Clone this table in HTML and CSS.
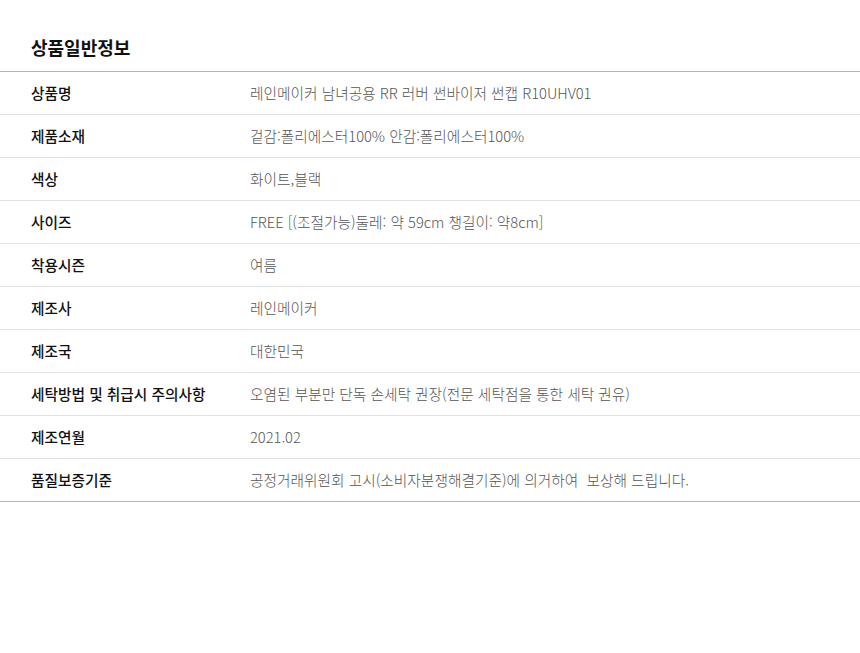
FILE: index.html
```html
<!DOCTYPE html>
<html lang="ko">
<head>
<meta charset="utf-8">
<link rel="stylesheet" href="styles.css">
</head>
<body>
<div class="info">
  <h2 class="title">상품일반정보</h2>
  <div class="table">
    <div class="row"><div class="label">상품명</div><div class="value">레인메이커 남녀공용 RR 러버 썬바이저 썬캡 R10UHV01</div></div>
    <div class="row"><div class="label">제품소재</div><div class="value">겉감:폴리에스터100% 안감:폴리에스터100%</div></div>
    <div class="row"><div class="label">색상</div><div class="value">화이트,블랙</div></div>
    <div class="row"><div class="label">사이즈</div><div class="value">FREE [(조절가능)둘레: 약 59cm 챙길이: 약8cm]</div></div>
    <div class="row"><div class="label">착용시즌</div><div class="value">여름</div></div>
    <div class="row"><div class="label">제조사</div><div class="value">레인메이커</div></div>
    <div class="row"><div class="label">제조국</div><div class="value">대한민국</div></div>
    <div class="row"><div class="label">세탁방법 및 취급시 주의사항</div><div class="value">오염된 부분만 단독 손세탁 권장(전문 세탁점을 통한 세탁 권유)</div></div>
    <div class="row"><div class="label">제조연월</div><div class="value">2021.02</div></div>
    <div class="row last"><div class="label">품질보증기준</div><div class="value">공정거래위원회 고시(소비자분쟁해결기준)에 의거하여&nbsp; 보상해 드립니다.</div></div>
  </div>
</div>
</body>
</html>
```
FILE: styles.css
```css
html, body {
  margin: 0;
  padding: 0;
  background: #fff;
}
body {
  font-family: "Noto Sans CJK KR", "Noto Sans", sans-serif;
  color: #222;
}
.info {
  width: 860px;
}
.title {
  margin: 0;
  padding: 34px 0 11px 31px;
  font-size: 18px;
  line-height: 26px;
  font-weight: 700;
  color: #111;
}
.table {
  border-top: 1px solid #b3b3b3;
}
.row {
  display: flex;
  align-items: center;
  height: 42px;
  border-bottom: 1px solid #e2e2e2;
  font-size: 14.7px;
  line-height: 20px;
}
.row.last {
  border-bottom-color: #b3b3b3;
}
.label {
  width: 219px;
  padding-left: 31px;
  font-weight: 500;
  color: #111;
}
.value {
  flex: 1;
  font-weight: 300;
  color: #555;
}
```
